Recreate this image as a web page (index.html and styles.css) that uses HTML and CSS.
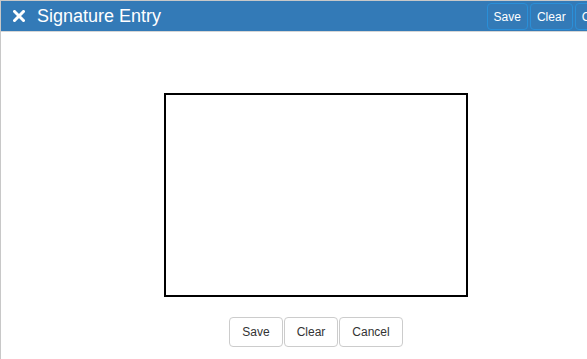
FILE: index.html
```html
<!DOCTYPE html>
<html>
<head>
<meta charset="utf-8">
<link rel="stylesheet" href="styles.css">
</head>
<body>
<div class="page">
  <header class="bar">
    <div class="title">
      <svg class="close" width="12" height="12" viewBox="0 0 12 12"><path d="M1.5 1.5 L10.5 10.5 M10.5 1.5 L1.5 10.5" stroke="#fff" stroke-width="3" stroke-linecap="square" fill="none"/></svg>
      <span>Signature Entry</span>
    </div>
    <div class="bar-actions">
      <button class="hbtn">Save</button>
      <button class="hbtn">Clear</button>
      <button class="hbtn">Cancel</button>
    </div>
  </header>
  <main class="content">
    <div class="pad"></div>
    <div class="actions">
      <button class="btn">Save</button>
      <button class="btn">Clear</button>
      <button class="btn">Cancel</button>
    </div>
  </main>
</div>
</body>
</html>
```

FILE: styles.css
```css
html, body {
  margin: 0;
  padding: 0;
  overflow: hidden;
  background: #fff;
  font-family: "Liberation Sans", Arial, sans-serif;
}
.page {
  width: 630px;
  height: 358px;
  border-top: 1px solid #c8c8c8;
  border-left: 1px solid #c8c8c8;
}
.bar {
  height: 30px;
  background: #337ab7;
  border-bottom: 1px solid #d6d6d6;
  display: flex;
  align-items: center;
  justify-content: space-between;
  padding: 0 5px 0 12px;
}
.title {
  display: flex;
  align-items: center;
  gap: 12px;
  color: #fff;
  font-size: 18px;
}
.close {
  display: block;
  margin-top: -1px;
}
.bar-actions {
  display: flex;
  gap: 2px;
  align-self: flex-start;
  margin-top: 2px;
}
.hbtn {
  height: 27px;
  padding: 0 6px;
  font-family: inherit;
  font-size: 12px;
  color: #fff;
  background: #337ab7;
  border: 1px solid #2a8fd8;
  border-radius: 4px;
}
.content {
  display: flex;
  flex-direction: column;
  align-items: center;
  padding-top: 61px;
}
.pad {
  width: 300px;
  height: 200px;
  border: 2px solid #000;
  background: #fff;
}
.actions {
  display: flex;
  gap: 1px;
  margin-top: 20px;
}
.btn {
  height: 30px;
  padding: 0 12px;
  font-family: inherit;
  font-size: 12px;
  color: #333;
  background: #fff;
  border: 1px solid #ccc;
  border-radius: 4px;
}
```
